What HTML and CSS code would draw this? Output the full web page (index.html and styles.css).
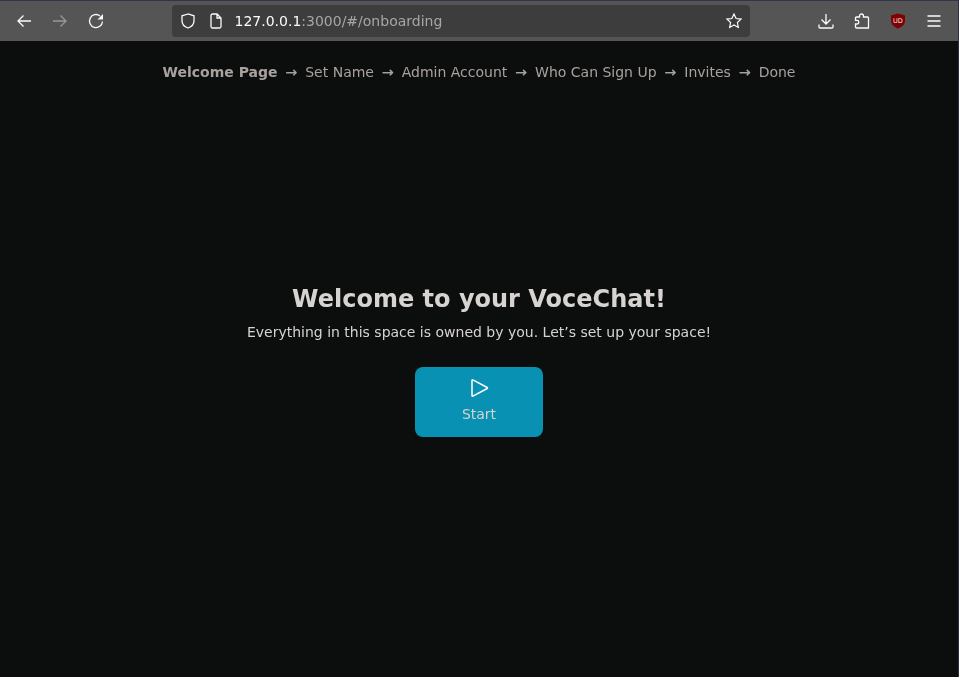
FILE: index.html
```html
<!DOCTYPE html>
<html lang="en">
	<head>
		<meta charset="utf-8">
		<title>VoceChat</title>
		<link rel="stylesheet" href="styles.css">
	</head>
	<body>
		<!-- browser toolbar -->
		<header class="toolbar">
			<div class="nav-buttons">
				<svg class="icon" viewBox="0 0 16 16"><path d="M15 8H2M7.500 2.500 2 8l5.500 5.500"/></svg>
				<svg class="icon icon-off" viewBox="0 0 16 16"><path d="M1 8h13M8.500 2.500 14 8l-5.500 5.500"/></svg>
				<svg class="icon" viewBox="0 0 16 16"><path d="M14.500 8.500A6.500 6.500 0 1 1 12 2.900"/><path class="fill" d="M15 1v5.500H9.500z"/></svg>
			</div>
			<div class="url-bar">
				<svg class="icon url-shield" viewBox="0 0 16 16"><path d="M8 1 2 2.800v5C2 11.500 5 14 8 15c3-1 6-3.500 6-7.200v-5z"/></svg>
				<svg class="icon url-page" viewBox="0 0 16 16"><path d="M3 2.500A1.500 1.500 0 0 1 4.500 1H9l4 4v8.500a1.500 1.500 0 0 1-1.500 1.500h-7A1.500 1.500 0 0 1 3 13.500zM9 1v4h4"/></svg>
				<span class="url-text">127.0.0.1<span class="url-dim">:3000/#/onboarding</span></span>
				<svg class="icon url-star" viewBox="0 0 16 16"><path d="m8 1 2.100 4.500 4.900.6-3.600 3.400.9 4.900L8 11.900l-4.300 2.500.9-4.900L1 6.100l4.900-.6z"/></svg>
			</div>
			<div class="tool-buttons">
				<svg class="icon" viewBox="0 0 16 16"><path d="M8 1v9.500M3.500 6.500 8 11l4.500-4.500M1 11.500V14a1 1 0 0 0 1 1h12a1 1 0 0 0 1-1v-2.500"/></svg>
				<svg class="icon" viewBox="0 0 16 16"><path d="M5.500 4V3a2 2 0 0 1 4 0v1h4a1 1 0 0 1 1 1v10H2.500a1 1 0 0 1-1-1v-3h1.500a1.800 1.800 0 0 0 0-3.600H1.500V5a1 1 0 0 1 1-1z"/></svg>
				<svg class="ublock" viewBox="0 0 16 16"><path d="M8 .5 15 2.500v5c0 4-3 6.500-7 8-4-1.500-7-4-7-8v-5z"/><text x="8" y="9.500" text-anchor="middle">UD</text></svg>
				<svg class="icon" viewBox="0 0 16 16"><path d="M1.500 3h13M1.500 8h13M1.500 13h13"/></svg>
			</div>
		</header>

		<main class="page">
			<nav class="steps">
				<span class="step step-active">Welcome Page</span>
				<span class="arrow">→</span>
				<span class="step">Set Name</span>
				<span class="arrow">→</span>
				<span class="step">Admin Account</span>
				<span class="arrow">→</span>
				<span class="step">Who Can Sign Up</span>
				<span class="arrow">→</span>
				<span class="step">Invites</span>
				<span class="arrow">→</span>
				<span class="step">Done</span>
			</nav>
			<section class="welcome">
				<h1>Welcome to your VoceChat!</h1>
				<p>Everything in this space is owned by you. Let’s set up your space!</p>
				<button class="start" type="button">
					<svg class="start-icon" viewBox="0 0 20 20"><path d="M3 2.300v15.400a.6.600 0 0 0 .9.500l14.300-7.700a.6.600 0 0 0 0-1L3.900 1.800a.6.600 0 0 0-.9.500z"/></svg>
					<span>Start</span>
				</button>
			</section>
		</main>
	</body>
</html>
```

FILE: styles.css
```css
html, body {
	margin: 0;
	height: 100%;
	background: #0c0e0d;
}
body {
	display: flex;
	flex-direction: column;
	box-sizing: border-box;
	height: 677px;
	overflow: hidden;
	border-right: 1px solid #2f2f45;
	font-family: "DejaVu Sans", sans-serif;
	font-size: 14px;
}

.toolbar {
	display: flex;
	align-items: center;
	flex: none;
	height: 40px;
	border-top: 1px solid #33334a;
	background: #555555;
}
.icon {
	width: 16px;
	height: 16px;
	flex: none;
	fill: none;
	stroke: #fbfbfe;
	stroke-width: 1.300;
}
.icon .fill {
	fill: #fbfbfe;
	stroke: none;
}
.icon-off {
	opacity: 0.4;
}
.nav-buttons {
	display: flex;
	gap: 20px;
	width: 172px;
	padding-left: 16px;
	box-sizing: border-box;
}
.url-bar {
	display: flex;
	align-items: center;
	width: 578px;
	height: 32px;
	box-sizing: border-box;
	padding: 0 8px;
	border-radius: 4px;
	background: #3d3d3d;
	color: #fbfbfe;
}
.url-page {
	margin-left: 12px;
}
.url-text {
	margin-left: 10.500px;
	flex: 1;
	font-size: 14px;
	will-change: opacity;
}
.url-dim {
	color: #a6a6a6;
}
.url-star {
	stroke-width: 1.200;
}
.tool-buttons {
	display: flex;
	align-items: center;
	gap: 20px;
	margin-left: 68px;
}
.ublock {
	width: 16px;
	height: 16px;
}
.ublock path {
	fill: #800000;
}
.ublock text {
	fill: #f4e8e8;
	font-size: 6.500px;
}

.page {
	flex: 1;
	display: flex;
	flex-direction: column;
	align-items: center;
	color: #d6d3d1;
	will-change: opacity;
}
.steps {
	display: flex;
	gap: 8px;
	margin-top: 22px;
	line-height: 18px;
	color: #a8a29e;
}
.step-active {
	font-weight: bold;
}
.arrow {
	-webkit-text-stroke: 0.3px #a8a29e;
}
.welcome {
	display: flex;
	flex-direction: column;
	align-items: center;
	margin-top: 202px;
}
h1 {
	margin: 0;
	font-size: 24px;
	line-height: 32px;
	font-weight: bold;
}
p {
	margin: 7px 0 0;
	line-height: 20px;
}
.start {
	display: flex;
	flex-direction: column;
	align-items: center;
	width: 128px;
	height: 70px;
	margin-top: 25px;
	padding: 11px 0 0;
	border: 0;
	border-radius: 8px;
	background: #0891b2;
	color: #d6d3d1;
	font-family: inherit;
	font-size: 14px;
}
.start-icon {
	width: 20px;
	height: 20px;
	fill: none;
	stroke: #ffffff;
	stroke-width: 1.500;
}
.start span {
	margin-top: 7px;
	line-height: 18px;
}
```
